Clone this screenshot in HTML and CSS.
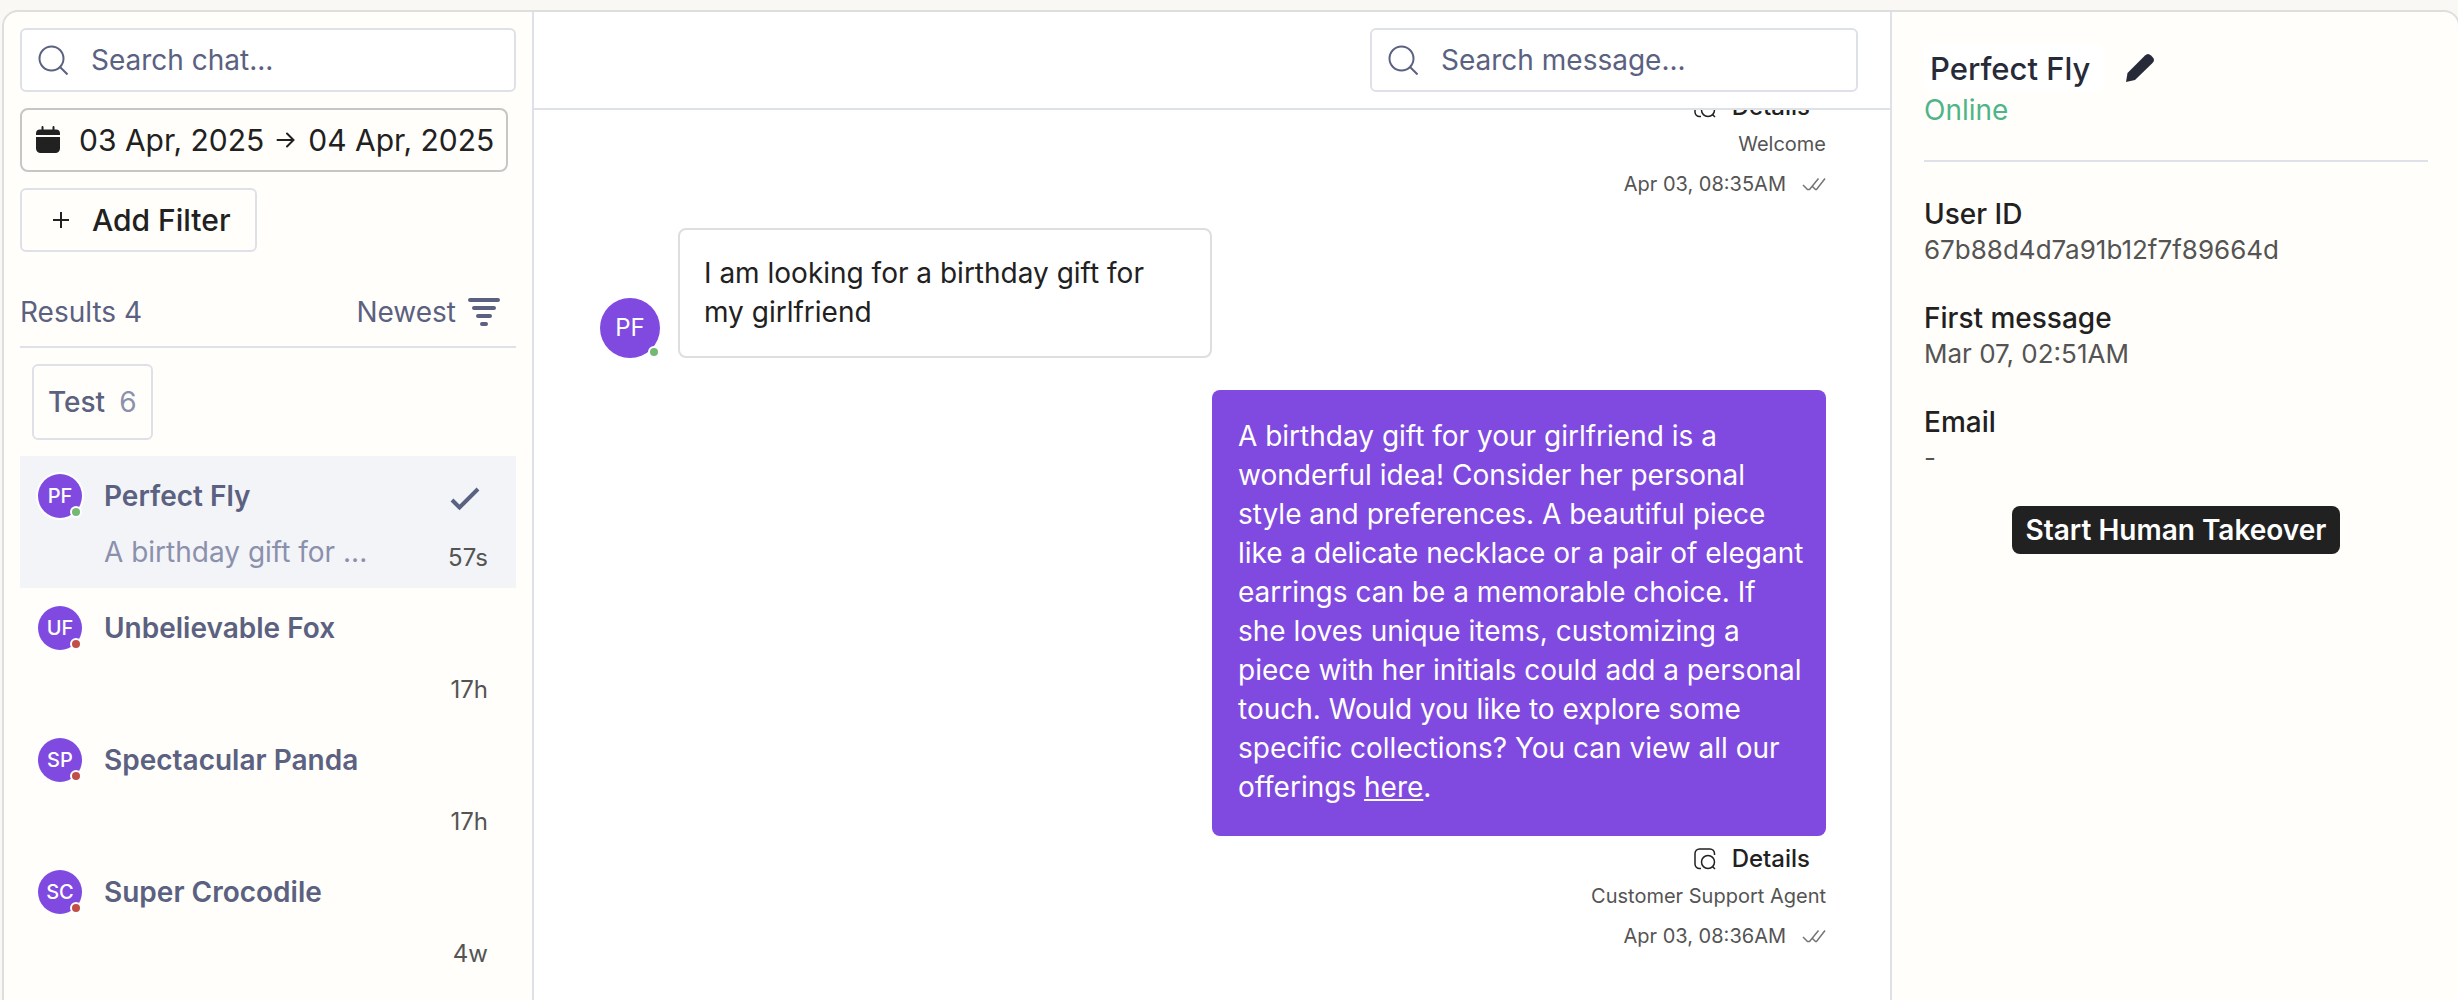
FILE: index.html
```html
<!DOCTYPE html>
<html lang="en">
<head>
<meta charset="utf-8">
<title>Inbox</title>
<meta name="viewport" content="width=device-width, initial-scale=1">
<link rel="stylesheet" href="styles.css">
</head>
<body>
<div class="app">
  <aside class="sidebar">
    <label class="search">
      <svg class="search-icon" viewBox="0 0 30 30" aria-hidden="true"><circle cx="13.500" cy="13.500" r="12"/><path d="M22 22 29.500 29.500"/></svg>
      <input type="search" placeholder="Search chat..." aria-label="Search chat">
    </label>
    <button class="date-range" type="button">
      <svg class="calendar-icon" viewBox="0 0 24 28" aria-hidden="true"><path d="M0 9V7.500a4 4 0 0 1 4-4h1.500V1a1 1 0 0 1 2 0v2.500h9V1a1 1 0 0 1 2 0v2.500H20a4 4 0 0 1 4 4V9zM0 11h24v11.500a4.500 4.500 0 0 1-4.500 4.500h-15A4.500 4.500 0 0 1 0 22.500z"/></svg>
      <span>03 Apr, 2025</span>
      <svg class="arrow-icon" viewBox="0 0 20 18" aria-hidden="true"><path d="M1.500 9h16M11 2.500 17.500 9 11 15.500"/></svg>
      <span>04 Apr, 2025</span>
    </button>
    <button class="add-filter" type="button">
      <svg class="plus-icon" viewBox="0 0 18 18" aria-hidden="true"><path d="M9 1v16M1 9h16"/></svg>
      <span>Add Filter</span>
    </button>
    <div class="results">
      <span>Results 4</span>
      <button class="sort" type="button">Newest
        <svg class="sort-icon" viewBox="0 0 32 28" aria-hidden="true"><path d="M2 2h28M6 10h20M10 18h12M14 26h4"/></svg>
      </button>
    </div>
    <button class="tag" type="button"><span>Test</span><span class="tag-count">6</span></button>
    <ul class="chats">
      <li class="chat chat-active">
        <span class="avatar">PF<i class="status online"></i></span>
        <span class="chat-name">Perfect Fly</span>
        <svg class="check-icon" viewBox="0 0 30 24" aria-hidden="true"><path d="M2 13l7.500 7.500L28 2"/></svg>
        <span class="chat-preview">A birthday gift for ...</span>
        <time class="chat-time">57s</time>
      </li>
      <li class="chat">
        <span class="avatar">UF<i class="status offline"></i></span>
        <span class="chat-name">Unbelievable Fox</span>
        <time class="chat-time">17h</time>
      </li>
      <li class="chat">
        <span class="avatar">SP<i class="status offline"></i></span>
        <span class="chat-name">Spectacular Panda</span>
        <time class="chat-time">17h</time>
      </li>
      <li class="chat">
        <span class="avatar">SC<i class="status offline"></i></span>
        <span class="chat-name">Super Crocodile</span>
        <time class="chat-time">4w</time>
      </li>
    </ul>
  </aside>

  <main class="conversation">
    <header class="toolbar">
      <label class="search">
        <svg class="search-icon" viewBox="0 0 30 30" aria-hidden="true"><circle cx="13.500" cy="13.500" r="12"/><path d="M22 22 29.500 29.500"/></svg>
        <input type="search" placeholder="Search message..." aria-label="Search message">
      </label>
    </header>
    <div class="messages">
      <div class="meta">
        <button class="details" type="button"><svg class="details-icon" viewBox="0 0 22 22" aria-hidden="true"><g stroke-width="1.500"><path d="M7 20.500H5.500A4.500 4.500 0 0 1 1 16V5.500A4.500 4.500 0 0 1 5.500 1H16a4.500 4.500 0 0 1 4.500 4.500V7"/><circle cx="14" cy="14" r="6.500"/><path d="M18.500 18.500 21 21"/></g></svg>Details</button>
        <span class="agent">Welcome</span>
        <span class="sent"><time>Apr 03, 08:35AM</time><svg class="seen-icon" viewBox="0 0 24 14" aria-hidden="true"><g stroke-width="1.500"><path d="M1 8l4.500 4.500h2L16.500 1.500M10.500 9.500l3 3h1L23 1.500"/></g></svg></span>
      </div>
      <div class="incoming">
        <span class="avatar avatar-large">PF<i class="status online"></i></span>
        <p class="bubble">I am looking for a birthday gift for my girlfriend</p>
      </div>
      <div class="outgoing">
        <p class="bubble bubble-bot">A birthday gift for your girlfriend is a wonderful idea! Consider her personal style and preferences. A beautiful piece like a delicate necklace or a pair of elegant earrings can be a memorable choice. If she loves unique items, customizing a piece with her initials could add a personal touch. Would you like to explore some specific collections? You can view all our offerings <a href="#">here</a>.</p>
        <div class="meta">
          <button class="details" type="button"><svg class="details-icon" viewBox="0 0 22 22" aria-hidden="true"><g stroke-width="1.500"><path d="M7 20.500H5.500A4.500 4.500 0 0 1 1 16V5.500A4.500 4.500 0 0 1 5.500 1H16a4.500 4.500 0 0 1 4.500 4.500V7"/><circle cx="14" cy="14" r="6.500"/><path d="M18.500 18.500 21 21"/></g></svg>Details</button>
          <span class="agent">Customer Support Agent</span>
          <span class="sent"><time>Apr 03, 08:36AM</time><svg class="seen-icon" viewBox="0 0 24 14" aria-hidden="true"><g stroke-width="1.500"><path d="M1 8l4.500 4.500h2L16.500 1.500M10.500 9.500l3 3h1L23 1.500"/></g></svg></span>
        </div>
      </div>
    </div>
  </main>

  <aside class="profile">
    <div class="profile-head">
      <div class="profile-title">
        <input class="profile-name" type="text" value="Perfect Fly" aria-label="Name">
        <button class="edit" type="button" aria-label="Edit name"><svg viewBox="0 0 28 28" aria-hidden="true"><path d="M0 28l1.500-9L19 1.500q3-3 6 0l1.500 1.500q3 3 0 6L9 26z"/></svg></button>
      </div>
      <span class="presence">Online</span>
    </div>
    <dl class="facts">
      <div><dt>User ID</dt><dd>67b88d4d7a91b12f7f89664d</dd></div>
      <div><dt>First message</dt><dd>Mar 07, 02:51AM</dd></div>
      <div><dt>Email</dt><dd>-</dd></div>
    </dl>
    <button class="takeover" type="button">Start Human Takeover</button>
  </aside>
</div>
</body>
</html>
```
FILE: styles.css
```css
* { box-sizing: border-box; }

body {
  margin: 0;
  height: 100vh;
  padding: 10px 0 0 2px;
  overflow: hidden;
  background: #f9f8f4;
  color: #212121;
  font: 400 28px/36px Inter, "Liberation Sans", sans-serif;
}

button, input { font: inherit; color: inherit; }
button { cursor: pointer; padding: 0; border: 0; background: none; }
svg { display: block; flex: none; fill: none; stroke: currentColor; stroke-width: 2; }
p, ul, dl, dd { margin: 0; padding: 0; }

.app {
  display: grid;
  grid-template-columns: 530px minmax(0, 1fr) 568px;
  height: 100%;
  margin-right: -2px;
  overflow: hidden;
  border: 2px solid #dedede;
  border-bottom: 0;
  border-radius: 16px 16px 0 0;
  background: #fffefa;
}

/* Chat list */
.sidebar {
  display: flex;
  flex-direction: column;
  align-items: flex-start;
  min-height: 0;
  padding: 16px;
  border-right: 2px solid #dfe1e8;
  color: #5b6180;
}

.search {
  display: flex;
  align-items: center;
  gap: 23px;
  width: 100%;
  height: 64px;
  padding: 0 16px;
  border: 2px solid #dfe1e8;
  border-radius: 6px;
  background: #fff;
  color: #5b6180;
}
.search input { flex: 1; min-width: 0; padding: 0; border: 0; outline: 0; background: none; }
.search input::placeholder { color: inherit; opacity: 1; }
.search-icon { width: 30px; height: 30px; }

.date-range, .add-filter {
  display: flex;
  align-items: center;
  height: 64px;
  margin-top: 16px;
  border: 2px solid #dfe1e8;
  border-radius: 6px;
  color: #212121;
  font-size: 30px;
  white-space: nowrap;
}
.date-range { padding: 0 12px 0 14px; border-color: #c6c6c6; border-radius: 8px; }
.add-filter { gap: 22px; padding: 0 24px 0 30px; font-weight: 500; }
.calendar-icon { width: 24px; height: 28px; margin-right: 19px; fill: currentColor; stroke: none; }
.arrow-icon { width: 20px; height: 18px; margin: 0 12px; stroke-linecap: round; }
.plus-icon { width: 18px; height: 18px; }

.results {
  display: flex;
  align-items: center;
  justify-content: space-between;
  width: 100%;
  height: 96px;
  padding-top: 26px;
  border-bottom: 2px solid #dfe1e8;
}
.sort { display: flex; align-items: center; gap: 12px; padding-right: 16px; }
.sort-icon { width: 32px; height: 28px; stroke-width: 4; stroke-linecap: round; }

.tag {
  display: flex;
  align-items: center;
  gap: 14px;
  height: 76px;
  margin: 16px 12px;
  padding: 0 14px;
  border: 2px solid #dfe1e8;
  border-radius: 6px;
  font-weight: 500;
}
.tag-count { color: #8b90ad; font-weight: 400; }

.chats { width: 100%; list-style: none; }
.chat {
  display: grid;
  grid-template-columns: 44px 1fr auto;
  grid-template-rows: 44px 44px;
  gap: 12px 22px;
  align-items: center;
  height: 132px;
  padding: 18px 28px 18px 18px;
}
.chat-active { background: #f3f4f7; }
.chat-name { font-weight: 600; }
.chat-preview { grid-area: 2 / 2; color: #8b90ad; }
.chat-time { grid-area: 2 / 3; justify-self: end; padding-top: 12px; color: #545454; font-size: 24px; }
.check-icon { justify-self: end; width: 30px; height: 24px; margin: 6px 8px 0 0; stroke-width: 4; }

.avatar {
  position: relative;
  display: grid;
  place-items: center;
  flex: none;
  width: 44px;
  height: 44px;
  border-radius: 50%;
  background: #8049e0;
  box-shadow: 0 0 0 2px #fff;
  color: #fff;
  font-size: 20px;
  font-weight: 500;
  line-height: 24px;
}
.avatar-large { width: 60px; height: 60px; font-size: 24px; font-weight: 400; }
.status { position: absolute; right: 0; bottom: 0; width: 12px; height: 12px; border: 2px solid #fff; border-radius: 50%; }
.online { background: #74b973; }
.offline { background: #c14e47; }

/* Conversation */
.conversation { display: flex; flex-direction: column; min-width: 0; min-height: 0; background: #fff; }
.toolbar { display: flex; justify-content: flex-end; flex: none; height: 98px; padding: 16px 32px; border-bottom: 2px solid #dfe1e8; }
.toolbar .search { width: 488px; }
.messages {
  display: flex;
  flex: 1;
  flex-direction: column;
  justify-content: flex-end;
  gap: 30px;
  min-height: 0;
  padding: 0 64px 50px 66px;
  overflow: hidden;
}
.meta { display: flex; flex: none; flex-direction: column; align-items: flex-end; color: #545454; font-size: 20px; line-height: 28px; }
.details { display: flex; align-items: center; gap: 16px; height: 46px; padding-right: 16px; color: #212121; font-size: 24px; font-weight: 500; }
.details-icon { width: 22px; height: 22px; }
.sent { display: flex; align-items: center; gap: 16px; margin-top: 12px; }
.seen-icon { width: 24px; height: 14px; color: #757575; }
.incoming { display: flex; flex: none; align-items: flex-end; gap: 18px; margin-bottom: 2px; }
.outgoing { display: flex; flex: none; flex-direction: column; align-items: flex-end; }
.bubble { width: 534px; padding: 24px; border: 2px solid #dedede; border-radius: 8px; line-height: 39px; }
.bubble-bot { width: 614px; padding: 27px 18px 29px 26px; border: 0; background: #8049e0; color: #fff; }
.bubble a { color: inherit; }

/* Profile */
.profile { display: flex; flex-direction: column; padding: 32px 30px 32px 32px; border-left: 2px solid #dfe1e8; }
.profile-head { display: flex; flex-direction: column; padding-bottom: 32px; border-bottom: 2px solid #dfe1e8; }
.profile-title { display: flex; align-items: center; gap: 22px; color: #272a38; }
.profile-name { width: 180px; height: 48px; padding: 0 6px; border: 0; border-radius: 8px; background: #fff; font-size: 31px; font-weight: 500; }
.edit svg { width: 28px; height: 28px; fill: currentColor; stroke: none; }
.presence { color: #50b48a; }
.facts { display: flex; flex-direction: column; gap: 32px; padding: 34px 0 30px; }
.facts dt { font-weight: 500; }
.facts dd { color: #545454; font-size: 26px; }
.takeover { align-self: center; height: 48px; padding: 0 14px; border-radius: 8px; background: #212121; color: #fff; font-weight: 600; }
```
